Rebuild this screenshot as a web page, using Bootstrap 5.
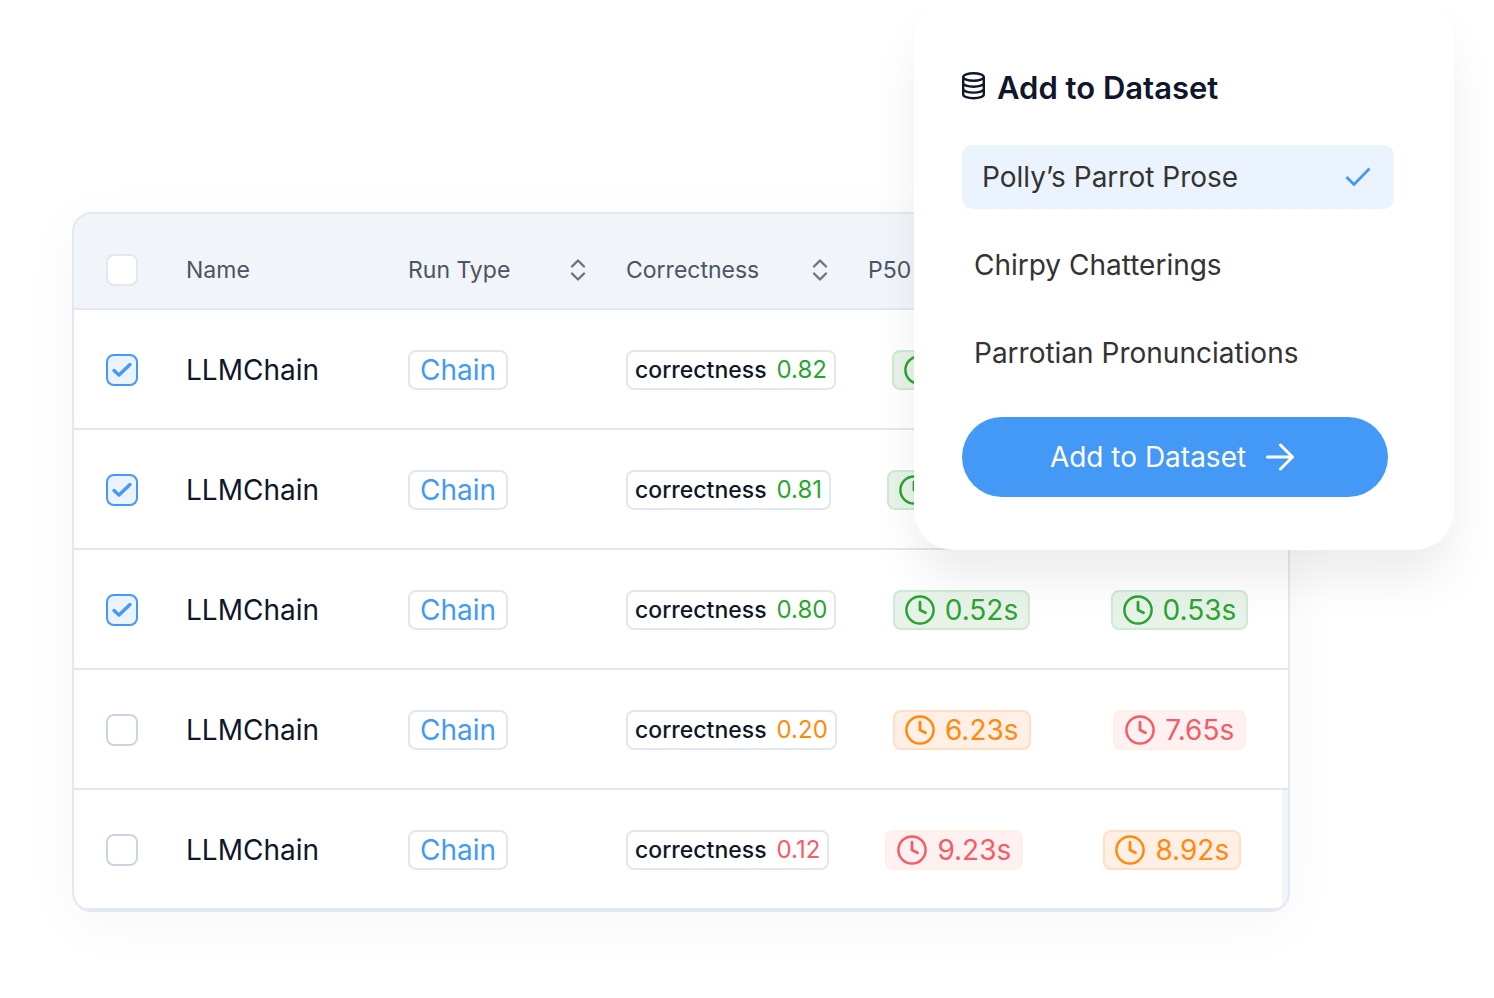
<!DOCTYPE html>
<html lang="en">
<head>
<meta charset="utf-8">
<meta name="viewport" content="width=device-width, initial-scale=1">
<title>Add to Dataset</title>
<link href="https://cdn.jsdelivr.net/npm/bootstrap@5.3.0/dist/css/bootstrap.min.css" rel="stylesheet">
<style>
  body { font-family: Inter, "Open Sans", sans-serif; color: #0f172a; background: #fff; }
  .stage { padding: 212px 204px 86px 72px; overflow: hidden; }

  /* Runs table */
  .runs { border: 2px solid #e2e8f0; border-radius: 20px; background: #fff; overflow: hidden; box-shadow: 0 12px 56px rgba(0, 0, 0, .04); }
  .runs :where(th, td) { padding: 0; }
  .runs tr { border-bottom: 2px solid #e2e8f0; }
  .runs thead tr { height: 96px; padding-top: 18px; background: #f1f4f9; }
  .runs tbody tr { height: 120px; padding-top: 2px; }
  .runs tbody tr:last-child { border-right: 6px solid #f1f4f9; }
  .runs th { font-size: 23px; font-weight: 400; color: #4b5563; }
  .c-check { width: 112px; padding-left: 32px; }
  .c-name { width: 222px; font-size: 28px; }
  .c-type { width: 218px; }
  .c-score { width: 242px; }
  .c-sort { padding-right: 40px; }
  .c-pill { margin-right: 56px; }
  .c-p50 { margin-right: 80px; }
  .c-time { min-width: 138px; }
  .runs .form-check-input { width: 32px; height: 32px; border: 2px solid #cbd5e1; border-radius: 8px; }
  .runs thead .form-check-input { border-color: #e2e8f0; }
  .runs .form-check-input:checked { background-color: #ebf3ff; border-color: #4499f7;
    background-image: url("data:image/svg+xml,%3Csvg xmlns='http://www.w3.org/2000/svg' viewBox='2 2 28 28'%3E%3Cpath d='M8 16.5l5 4.5L24 10.5' fill='none' stroke='%234499f7' stroke-width='3.4' stroke-linecap='round' stroke-linejoin='round'/%3E%3C/svg%3E"); }
  .pill { height: 40px; border: 2px solid #e2e6f0; border-radius: 8px; white-space: nowrap; }
  .pill-type { width: 100px; font-size: 28px; color: #4499f7; }
  .pill-score { padding: 0 7px; gap: 10px; font-size: 23px; font-weight: 500; }
  .pill-score span { font-size: 24px; font-weight: 400; }
  .pill-time { padding: 0 10px; gap: 10px; font-size: 28px; }
  .ok { color: #2aa52f; }
  .warn { color: #ff8a0c; }
  .bad { color: #f65c66; }
  .pill-time.ok { background: #e7f2e9; border-color: #cfe9d3; }
  .pill-time.warn { background: #ffefe4; border-color: #ffdfc5; }
  .pill-time.bad { background: #fff1f1; border-color: #ffefe6; }

  /* Dataset picker floating over the table */
  .picker { top: 0; right: 40px; width: 540px; padding: 64px 60px 53px 48px; border-radius: 40px; background: #fff; box-shadow: 0 32px 48px -4px rgba(0, 0, 0, .08); }
  .picker h2 { gap: 12px; margin-bottom: 33px; font-size: 31px; line-height: 48px; font-weight: 600; }
  .picker h2 svg { margin-bottom: 4px; }
  .choices { gap: 24px; margin-bottom: 32px; }
  .choice { height: 64px; padding: 0 12px; border: 0; border-radius: 10px; background: none; font-size: 28px; color: #333; }
  .choice.chosen { padding: 0 20px; background: #ebf3ff; }
  .go { width: 426px; height: 80px; gap: 20px; padding: 0 18px 0 12px; border-radius: 40px; background: #4499f7; color: #fff; font-size: 28px; }
  .go:hover { background: #2f87ea; color: #fff; }
</style>
</head>
<body>
<svg class="d-none" aria-hidden="true">
  <symbol id="clock" viewBox="0 0 30 30"><g fill="none" stroke="currentColor" stroke-linecap="round" stroke-linejoin="round"><circle cx="15" cy="15" r="13.600" stroke-width="2.500"/><path d="M15 7.200v7.800l5.500 2.800" stroke-width="2.800"/></g></symbol>
  <symbol id="sort" viewBox="0 0 16 22"><path d="M2 7.500l6-6 6 6M2 14.500l6 6 6-6" fill="none" stroke="#6b7280" stroke-width="2.300" stroke-linecap="round" stroke-linejoin="round"/></symbol>
</svg>

<main class="stage position-relative">
  <div class="runs">
    <table class="d-block w-100">
      <thead class="d-block">
        <tr class="d-flex align-items-center">
          <th class="c-check d-flex"><input class="form-check-input m-0" type="checkbox" aria-label="Select all runs"></th>
          <th class="c-name">Name</th>
          <th class="c-type c-sort d-flex align-items-center justify-content-between">Run Type <svg width="16" height="22"><use href="#sort"/></svg></th>
          <th class="c-score c-sort d-flex align-items-center justify-content-between">Correctness <svg width="16" height="22"><use href="#sort"/></svg></th>
          <th>P50</th>
        </tr>
      </thead>
      <tbody class="d-block">
        <tr class="d-flex align-items-center">
          <td class="c-check d-flex"><input class="form-check-input m-0" type="checkbox" checked aria-label="Select run 1"></td>
          <td class="c-name">LLMChain</td>
          <td class="c-type"><span class="pill pill-type d-flex align-items-center justify-content-center">Chain</span></td>
          <td class="c-pill"><span class="pill pill-score d-flex align-items-center">correctness <span class="ok">0.82</span></span></td>
          <td class="c-time"><span class="pill pill-time ok d-flex align-items-center"><svg width="30" height="30"><use href="#clock"/></svg></span></td>
        </tr>
        <tr class="d-flex align-items-center">
          <td class="c-check d-flex"><input class="form-check-input m-0" type="checkbox" checked aria-label="Select run 2"></td>
          <td class="c-name">LLMChain</td>
          <td class="c-type"><span class="pill pill-type d-flex align-items-center justify-content-center">Chain</span></td>
          <td class="c-pill"><span class="pill pill-score d-flex align-items-center">correctness <span class="ok">0.81</span></span></td>
          <td class="c-time"><span class="pill pill-time ok d-flex align-items-center"><svg width="30" height="30"><use href="#clock"/></svg></span></td>
        </tr>
        <tr class="d-flex align-items-center">
          <td class="c-check d-flex"><input class="form-check-input m-0" type="checkbox" checked aria-label="Select run 3"></td>
          <td class="c-name">LLMChain</td>
          <td class="c-type"><span class="pill pill-type d-flex align-items-center justify-content-center">Chain</span></td>
          <td class="c-pill"><span class="pill pill-score d-flex align-items-center">correctness <span class="ok">0.80</span></span></td>
          <td class="c-time c-p50 d-flex justify-content-center"><span class="pill pill-time ok d-flex align-items-center"><svg width="30" height="30"><use href="#clock"/></svg>0.52s</span></td>
          <td class="c-time d-flex justify-content-center"><span class="pill pill-time ok d-flex align-items-center"><svg width="30" height="30"><use href="#clock"/></svg>0.53s</span></td>
        </tr>
        <tr class="d-flex align-items-center">
          <td class="c-check d-flex"><input class="form-check-input m-0" type="checkbox" aria-label="Select run 4"></td>
          <td class="c-name">LLMChain</td>
          <td class="c-type"><span class="pill pill-type d-flex align-items-center justify-content-center">Chain</span></td>
          <td class="c-pill"><span class="pill pill-score d-flex align-items-center">correctness <span class="warn">0.20</span></span></td>
          <td class="c-time c-p50 d-flex justify-content-center"><span class="pill pill-time warn d-flex align-items-center"><svg width="30" height="30"><use href="#clock"/></svg>6.23s</span></td>
          <td class="c-time d-flex justify-content-center"><span class="pill pill-time bad d-flex align-items-center"><svg width="30" height="30"><use href="#clock"/></svg>7.65s</span></td>
        </tr>
        <tr class="d-flex align-items-center">
          <td class="c-check d-flex"><input class="form-check-input m-0" type="checkbox" aria-label="Select run 5"></td>
          <td class="c-name">LLMChain</td>
          <td class="c-type"><span class="pill pill-type d-flex align-items-center justify-content-center">Chain</span></td>
          <td class="c-pill"><span class="pill pill-score d-flex align-items-center">correctness <span class="bad">0.12</span></span></td>
          <td class="c-time c-p50 d-flex justify-content-center"><span class="pill pill-time bad d-flex align-items-center"><svg width="30" height="30"><use href="#clock"/></svg>9.23s</span></td>
          <td class="c-time d-flex justify-content-center"><span class="pill pill-time warn d-flex align-items-center"><svg width="30" height="30"><use href="#clock"/></svg>8.92s</span></td>
        </tr>
      </tbody>
    </table>
  </div>

  <section class="picker position-absolute">
    <h2 class="d-flex align-items-center mt-0">
      <svg width="23" height="28" viewBox="0 0 23 28" fill="none" stroke="currentColor" stroke-width="2.400" aria-hidden="true"><ellipse cx="11.500" cy="5" rx="10.300" ry="3.800"/><path d="M1.200 5v17.500c0 2.200 4.600 3.800 10.300 3.800s10.300-1.600 10.300-3.800V5M1.200 11c0 2.200 4.600 3.800 10.300 3.800s10.300-1.600 10.300-3.800M1.200 16.800c0 2.200 4.600 3.800 10.300 3.800s10.300-1.600 10.300-3.800"/></svg>
      Add to Dataset
    </h2>
    <div class="choices d-flex flex-column">
      <button type="button" class="choice chosen d-flex align-items-center justify-content-between" aria-pressed="true">Polly’s Parrot Prose
        <svg width="32" height="32" viewBox="0 0 32 32" fill="none" stroke="#4499f7" stroke-width="2.800" aria-hidden="true"><path d="M4.500 16l7.500 7.500L27.500 7.500"/></svg>
      </button>
      <button type="button" class="choice text-start" aria-pressed="false">Chirpy Chatterings</button>
      <button type="button" class="choice text-start" aria-pressed="false">Parrotian Pronunciations</button>
    </div>
    <button type="button" class="go btn border-0 d-flex align-items-center justify-content-center">Add to Dataset
      <svg width="28" height="28" viewBox="0 0 28 28" fill="none" stroke="currentColor" stroke-width="3" stroke-linecap="round" stroke-linejoin="round" aria-hidden="true"><path d="M1.500 14h25M14.500 2l12 12-12 12"/></svg>
    </button>
  </section>
</main>
<script src="https://cdn.jsdelivr.net/npm/bootstrap@5.3.0/dist/js/bootstrap.bundle.min.js"></script>
</body>
</html>
